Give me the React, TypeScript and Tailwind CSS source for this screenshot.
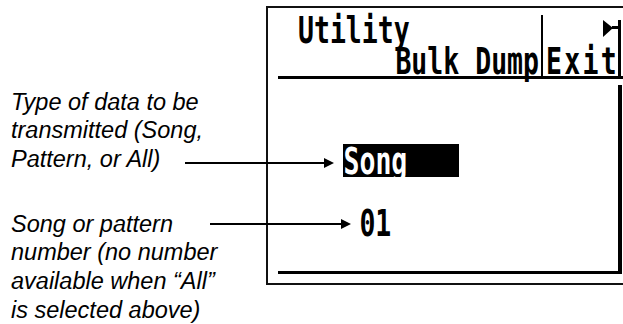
import React from "react";

const lcd = "font-['DejaVu_Sans_Mono',monospace] font-bold text-[26.5px] leading-none inline-block origin-top-left scale-y-[1.4] whitespace-pre";

const Arrow: React.FC<{ x1: number; x2: number; y: number }> = ({ x1, x2, y }) => (
    <svg className="absolute left-0 top-0 pointer-events-none" width={623} height={324}>
        <line x1={x1} y1={y} x2={x2 - 8} y2={y} stroke="#000" strokeWidth={2} />
        <polygon points={`${x2 - 10},${y - 5} ${x2},${y} ${x2 - 10},${y + 5}`} fill="#000" />
    </svg>
);

const Note: React.FC<{ lines: string[]; className?: string }> = ({ lines, className }) => (
    <div className={"font-['Liberation_Sans',Arial,sans-serif] italic text-[23.5px] leading-[28.7px] text-black " + (className || "")}>
        {lines.map((l) => (
            <div key={l}>{l}</div>
        ))}
    </div>
);

export default function App() {
    return (
        <div className="relative w-[623px] h-[324px] bg-white overflow-hidden flex">
            {/* annotations */}
            <div className="w-[266px] shrink-0 pl-[11px] pt-[87.7px]">
                <Note lines={["Type of data to be", "transmitted (Song,", "Pattern, or All)"]} />
                <Note className="mt-[35.8px]" lines={["Song or pattern", "number (no number", "available when \u201CAll\u201D", "is selected above)"]} />
            </div>

            {/* lcd screen */}
            <div className="mt-[6px] h-[279px] w-[357px] shrink-0 border-2 border-r-0 border-[#111] flex flex-col">
                <div className="ml-[10px] h-[71px] flex items-stretch">
                    <div className="w-[263px] border-b-[3px] border-black flex flex-col">
                        <div className="pl-[20px] pt-[3.7px] h-[30.2px]">
                            <span className={lcd}>Utility</span>
                        </div>
                        <div className="mt-[4.5px] text-right pr-[2px]">
                            <span className={lcd + " origin-top-right"}>Bulk Dump</span>
                        </div>
                    </div>
                    <div className="w-[2px] bg-black mt-[7px]" />
                    <div className="flex-1 border-b-[3px] border-black relative">
                        <div className="pl-[3px] pt-[34.7px]">
                            <span className={lcd + " tracking-[2.3px]"}>Exit</span>
                        </div>
                        <svg className="absolute left-[60px] top-[12px]" width={20} height={56}>
                            <polygon points="0,0 10,8 0,17" fill="#000" />
                            <rect x={9} y={6} width={8} height={3} fill="#000" />
                            <rect x={15} y={0} width={3} height={56} fill="#000" />
                        </svg>
                    </div>
                </div>

                <div className="ml-[10px] mt-[6px] w-[344px] h-[189px] border-r-4 border-b-[3px] border-black flex flex-col items-start shrink-0">
                    <div className="ml-[65px] mt-[59px] w-[116px] h-[33px] bg-black text-white shrink-0">
                        <span className={lcd + " -mt-[1.3px] ml-[0.5px] align-top"}>Song</span>
                    </div>
                    <div className="ml-[81.4px] mt-[27.7px]">
                        <span className={lcd}>01</span>
                    </div>
                </div>
            </div>

            <Arrow x1={185} x2={334} y={163} />
            <Arrow x1={210} x2={351} y={224} />
        </div>
    );
}
